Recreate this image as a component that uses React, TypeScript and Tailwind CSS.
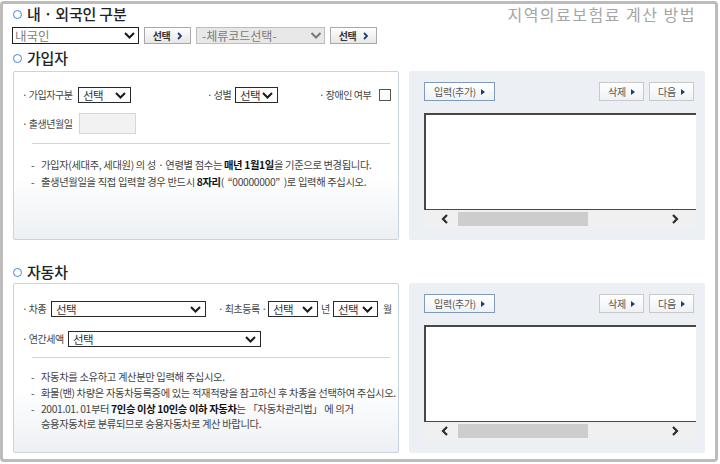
import React from "react";

const Ring = () => (
  <span className="inline-block w-[9px] h-[9px] rounded-full border-[1.5px] border-[#3f86d6] shrink-0" />
);

const Chev = ({ color = "#1a1a1a", w = 11 }: { color?: string; w?: number }) => (
  <svg width={w} height="7" viewBox="0 0 11 7" className="shrink-0">
    <path d="M1 1l4.5 4.5L10 1" fill="none" stroke={color} strokeWidth="2" />
  </svg>
);

const Tri = () => (
  <svg width="4" height="6" viewBox="0 0 4 6" className="shrink-0">
    <path d="M0 0L4 3L0 6Z" fill="#1c3d7a" />
  </svg>
);

const Sel = ({ w, text = "선택", h = 16 }: { w: number; text?: string; h?: number }) => (
  <div
    className="flex items-center justify-between border border-[#2a2a2a] bg-white pl-[4px] pr-[4px] shrink-0"
    style={{ width: w, height: h }}
  >
    <span className="text-[11.5px] leading-[14px] text-[#333] tracking-[-0.5px]">{text}</span>
    <Chev />
  </div>
);

const Label = ({ w, children }: { w: number; children: React.ReactNode }) => (
  <div className="flex items-center shrink-0" style={{ width: w }}>
    <span className="text-[10px] leading-[14px] text-[#444] tracking-[-0.5px] whitespace-nowrap">{children}</span>
  </div>
);

const SmallBtn = ({ w, blue, children }: { w: number; blue?: boolean; children: React.ReactNode }) => (
  <div
    className={
      "h-[19px] flex items-center justify-center gap-[5px] border bg-gradient-to-b from-white to-[#eef1f5] " +
      (blue ? "border-[#7e9bbb]" : "border-[#c9c9c9]")
    }
    style={{ width: w }}
  >
    <span className="text-[10px] leading-[12px] text-[#555] tracking-[-0.3px]">{children}</span>
    <Tri />
  </div>
);

const ScrollArrow = ({ dir }: { dir: "l" | "r" }) => (
  <svg width="8" height="10" viewBox="0 0 8 10" className="shrink-0">
    <path d={dir === "l" ? "M6 1L2 5L6 9" : "M2 1L6 5L2 9"} fill="none" stroke="#2b2b2b" strokeWidth="2.2" />
  </svg>
);

const RightPanel = ({ h }: { h: number }) => (
  <div className="w-[296px] bg-[#ecf0f5] rounded-[2px] pt-[11px] pl-[15px] pr-[9px]" style={{ height: h }}>
    <div className="flex h-[19px] mr-[2px]">
      <SmallBtn w={71} blue>
        입력(추가)
      </SmallBtn>
      <div className="ml-auto flex gap-[5px]">
        <SmallBtn w={45}>삭제</SmallBtn>
        <SmallBtn w={45}>다음</SmallBtn>
      </div>
    </div>
    <div className="mt-[12px] h-[97px] bg-white border-t-2 border-l-2 border-b border-[#484848]" />
    <div className="h-[18px] bg-[#f0f0f0] flex items-center">
      <div className="ml-[17px]">
        <ScrollArrow dir="l" />
      </div>
      <div className="ml-[9px] w-[130px] h-[14px] bg-[#cdcdcd]" />
      <div className="ml-auto mr-[17px]">
        <ScrollArrow dir="r" />
      </div>
    </div>
  </div>
);

const B = ({ children }: { children: React.ReactNode }) => <b className="text-[#111]">{children}</b>;

const Note = ({ children, cont }: { children: React.ReactNode; cont?: React.ReactNode }) => (
  <div className="flex text-[10.3px] leading-[13px] text-[#444] tracking-[-0.35px] whitespace-nowrap">
    <span className="w-[10px] shrink-0">-</span>
    <div className="flex flex-col gap-[2px]">
      <div className="h-[13px]">{children}</div>
      {cont ? <div className="h-[13px]">{cont}</div> : null}
    </div>
  </div>
);

const TopBtn = () => (
  <div className="w-[47px] h-[17px] flex items-center justify-center gap-[7px] border border-[#a9a9a9] bg-gradient-to-b from-white to-[#e6e6e6]">
    <span className="text-[10px] leading-[10px] font-bold text-[#333] tracking-[-0.5px]">선택</span>
    <svg width="5" height="8" viewBox="0 0 5 8">
      <path d="M1 1L4 4L1 7" fill="none" stroke="#1c3d7a" strokeWidth="1.8" />
    </svg>
  </div>
);

export default function App() {
  return (
    <div className="w-[720px] h-[464px] bg-white overflow-hidden font-['Noto_Sans_CJK_KR',sans-serif]">
      <div className="mt-[1px] w-[718px] h-[461px] border-[3px] border-[#bcbcbc] rounded-[4px] pl-[10px]">
        {/* title 1 */}
        <div className="w-[692px] h-[20px] flex items-center">
          <Ring />
          <span className="ml-[5px] text-[15px] leading-[16px] text-[#222] font-medium tracking-[-0.2px]">내 · 외국인 구분</span>
          <span className="ml-auto mr-[9px] text-[16px] leading-[16px] text-[#a5a5a5] tracking-[1.5px]">
            지역의료보험료 계산 방법
          </span>
        </div>
        {/* top selects */}
        <div className="mt-[3px] -ml-px flex items-center h-[17px] gap-[5px]">
          <div className="w-[127px] h-[17px] flex items-center justify-between border border-[#222] bg-white pl-[2px] pr-[2px]">
            <span className="text-[12.5px] leading-[14px] text-[#808080]">내국인</span>
            <Chev w={13} />
          </div>
          <TopBtn />
          <div className="w-[129px] h-[17px] flex items-center justify-between border border-[#bdbdbd] bg-[#e8e8e8] pl-[5px] pr-[2px]">
            <span className="text-[12px] leading-[14px] text-[#7a7a7a]">-체류코드선택-</span>
            <Chev w={12} color="#777" />
          </div>
          <TopBtn />
        </div>
        {/* title 2 */}
        <div className="mt-[4px] h-[20px] flex items-center">
          <Ring />
          <span className="ml-[5px] text-[15px] leading-[16px] text-[#222] font-medium tracking-[-0.2px]">가입자</span>
        </div>
        <div className="mt-[3px] flex gap-[10px]">
          <div className="w-[386px] h-[169px] border border-[#c7d4e2] rounded-[2px] bg-gradient-to-b from-white from-[62%] to-[#edf0f3] pt-[15px] pl-[8px]">
            <div className="flex items-center h-[16px]">
              <div className="w-[185px] flex items-center">
                <Label w={56}>· 가입자구분</Label>
                <Sel w={53} />
              </div>
              <div className="w-[112px] flex items-center">
                <Label w={28}>· 성별</Label>
                <Sel w={43} />
              </div>
              <div className="flex items-center">
                <Label w={60}>· 장애인 여부</Label>
                <div className="w-[12px] h-[12px] border border-[#555] bg-white" />
              </div>
            </div>
            <div className="mt-[10px] flex items-center h-[21px]">
              <Label w={57}>· 출생년월일</Label>
              <div className="w-[57px] h-[21px] border border-[#d6d6d6] bg-[#f2f2f2]" />
            </div>
            <div className="mt-[9px] ml-[10px] w-[358px] h-px bg-[#c9d7e5]" />
            <div className="mt-[14px] ml-[9px] flex flex-col gap-[4px]">
              <Note>
                가입자(세대주, 세대원) 의 성 · 연령별 점수는 <B>매년 1월1일</B>을 기준으로 변경됩니다.
              </Note>
              <Note>
                출생년월일을 직접 입력할 경우 반드시 <B>8자리</B>( &nbsp;“00000000” &nbsp;)로 입력해 주십시오.
              </Note>
            </div>
          </div>
          <RightPanel h={169} />
        </div>
        {/* title 3 */}
        <div className="mt-[22px] h-[20px] flex items-center">
          <Ring />
          <span className="ml-[5px] text-[15px] leading-[16px] text-[#222] font-medium tracking-[-0.2px]">자동차</span>
        </div>
        <div className="mt-[1px] flex gap-[10px]">
          <div className="w-[386px] h-[170px] border border-[#c7d4e2] rounded-[2px] bg-gradient-to-b from-white from-[62%] to-[#edf0f3] pt-[17px] pl-[8px]">
            <div className="flex items-center h-[16px]">
              <Label w={29}>· 차종</Label>
              <Sel w={155} />
              <span className="ml-[12px]" />
              <Label w={50}>· 최초등록 ·</Label>
              <Sel w={50} />
              <span className="w-[15px] text-center text-[10px] leading-[14px] text-[#444]">년</span>
              <Sel w={45} />
              <span className="ml-[5px] text-[10px] leading-[14px] text-[#444]">월</span>
            </div>
            <div className="mt-[14px] flex items-center h-[16px]">
              <Label w={46}>· 연간세액</Label>
              <Sel w={193} />
            </div>
            <div className="mt-[10px] ml-[10px] w-[358px] h-px bg-[#c9d7e5]" />
            <div className="mt-[12px] ml-[9px] flex flex-col gap-[3px]">
              <Note>자동차를 소유하고 계산분만 입력해 주십시오.</Note>
              <Note>화물(밴) 차량은 자동차등록증에 있는 적재적량을 참고하신 후 차종을 선택하여 주십시오.</Note>
              <Note cont="승용자동차로 분류되므로 승용자동차로 계산 바랍니다.">
                2001.01. 01부터 <B>7인승 이상 10인승 이하 자동차</B>는 「자동차관리법」 에 의거
              </Note>
            </div>
          </div>
          <RightPanel h={170} />
        </div>
      </div>
    </div>
  );
}
